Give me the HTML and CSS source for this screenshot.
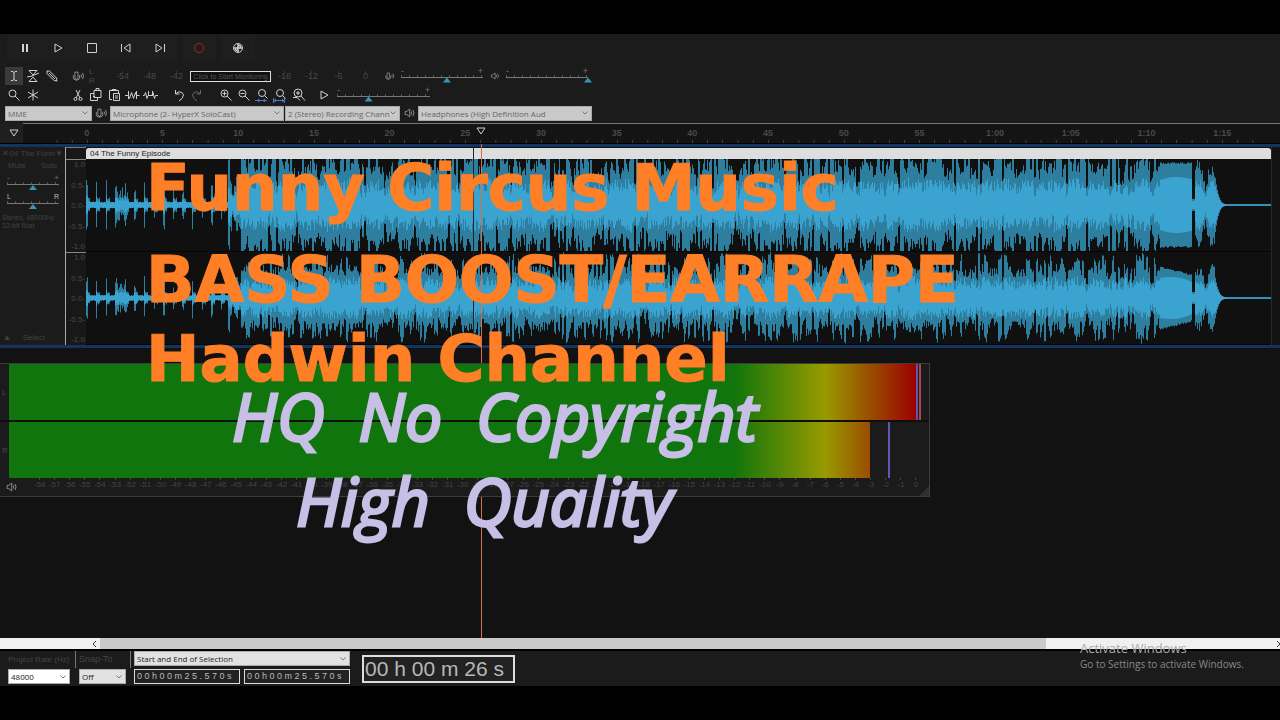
FILE: index.html
```html
<!DOCTYPE html>
<html lang="en">
<head>
<meta charset="utf-8">
<title>04 The Funny Episode</title>
<link rel="stylesheet" href="styles.css">
</head>
<body>
<svg class="defs" aria-hidden="true">
  <defs>
    <symbol id="mic" viewBox="0 0 18 18"><path d="M5 4h4v7q0 2-2 2t-2-2zM3 8v3q0 3 3 3h2q3 0 3-3V8M7 14v1M13 7q1 2 0 4M15 5q2 4 0 8"/></symbol>
    <symbol id="speaker" viewBox="0 0 18 18"><path d="M4 7h2l4-3v10l-4-3H4zM12 7q1 2 0 4M14 5q3 4 0 8"/></symbol>
    <symbol id="lens" viewBox="0 0 18 18"><circle cx="7.500" cy="7.500" r="3.500"/><path d="M10 10l4.500 4.500"/></symbol>
    <symbol id="play" viewBox="0 0 18 18"><path d="M6 5v8l7-4z"/></symbol>
  </defs>
</svg>

<main class="app">
  <div class="transport">
    <button aria-label="Pause"><svg viewBox="0 0 18 18"><path d="M8 5v8M12 5v8" stroke-width="2"/></svg></button>
    <button aria-label="Play"><svg><use href="#play"/></svg></button>
    <button aria-label="Stop"><svg viewBox="0 0 18 18"><path d="M4.500 4.500h9v9h-9z"/></svg></button>
    <button aria-label="Skip to start"><svg viewBox="0 0 18 18"><path d="M4.500 5v8M13 5v8L7 9z"/></svg></button>
    <button aria-label="Skip to end"><svg viewBox="0 0 18 18"><path d="M13.500 5v8M5 5v8l6-4z"/></svg></button>
    <button class="record" aria-label="Record"><svg viewBox="0 0 18 18"><circle cx="9" cy="9" r="4.500"/></svg></button>
    <button class="share" aria-label="Share audio"><svg viewBox="0 0 18 18"><circle cx="9" cy="9" r="4.500"/><path d="M9 5v8M5 9h8M10 6l2 2M6 10l2 2" stroke-width="1.500"/></svg></button>
  </div>

  <div class="tools">
    <div class="group pair">
      <button class="on" aria-label="Selection tool"><svg viewBox="0 0 18 18"><path d="M6 4.500h2l1 1 1-1h2M9 5v8M6 13.500h2l1-1 1 1h2"/></svg></button>
      <button aria-label="Envelope tool"><svg viewBox="0 0 18 18"><path d="M5 3.500h8L9 8zM9 10l4 4.500H5zM3 10l5-1 7-3"/></svg></button>
      <button aria-label="Draw tool"><svg viewBox="0 0 18 18"><path d="M4 4l2.500 0 7 7 .5 3-3-.5-7-7zM6 6l6 6"/></svg></button>
    </div>
    <div class="group rec-meter">
      <button aria-label="Record meter"><svg class="dim"><use href="#mic"/></svg></button>
      <span class="lr"><i>L</i><i>R</i></span>
      <div class="scale"><span>-54</span><span>-48</span><span>-42</span><button class="monitor">Click to Start Monitoring</button><span>-18</span><span>-12</span><span>-6</span><span>0</span></div>
    </div>
    <div class="group volume">
      <svg class="dim"><use href="#mic"/></svg>
      <div class="slider"><span>-</span><span>+</span><input type="range" aria-label="Recording volume" min="0" max="100" value="56"></div>
    </div>
    <div class="group volume">
      <svg class="dim"><use href="#speaker"/></svg>
      <div class="slider"><span>-</span><span>+</span><input type="range" aria-label="Playback volume" min="0" max="100" value="100"></div>
    </div>
  </div>

  <div class="tools edit">
    <div class="group pair">
      <button aria-label="Zoom tool"><svg><use href="#lens"/></svg></button>
      <button aria-label="Multi tool"><svg viewBox="0 0 18 18"><path d="M9 3.500v11M4 6l10 6M4 12l10-6"/></svg></button>
    </div>
    <div class="group cutting">
      <button aria-label="Cut"><svg viewBox="0 0 18 18"><path d="M7 4l4 8M11 4l-4 8"/><circle cx="6.500" cy="13" r="1.500"/><circle cx="11.500" cy="13" r="1.500"/></svg></button>
      <button aria-label="Copy"><svg viewBox="0 0 18 18"><path d="M7 4.500h7v7H7zM7 7.500H3.500v7h7v-3M9 4V2.500h3V4M6 10.500h2"/></svg></button>
      <button aria-label="Paste"><svg viewBox="0 0 18 18"><path d="M7 13.500H4.500v-9h9V7M7 5V3.500h4V5M8.500 7.500h6v7h-6zM10 10h3M10 12h3"/></svg></button>
      <button aria-label="Trim"><svg viewBox="0 0 18 18"><path d="M2 9.500h3l1.500 3 2-6 2 6 2-6 1 3h3M5.500 5v8M13.500 5v8"/></svg></button>
      <button aria-label="Silence"><svg viewBox="0 0 18 18"><path d="M2 9.500h1.500l1-3 1.500 6 1-3h4l1-3 1.500 6 1-3H17M7.500 5v5M11.500 5v5"/></svg></button>
    </div>
    <div class="group history">
      <button aria-label="Undo"><svg viewBox="0 0 18 18"><path d="M5.500 4v4h4M6 7.500q3-3 6-1t0 6l-3 2.500"/></svg></button>
      <button class="off" aria-label="Redo"><svg viewBox="0 0 18 18"><path d="M12.500 4v4h-4M12 7.500q-3-3-6-1t0 6l3 2.500"/></svg></button>
    </div>
    <div class="group zooms">
      <button aria-label="Zoom in"><svg viewBox="0 0 18 18"><use href="#lens"/><path d="M5.500 7.500h4M7.500 5.500v4"/></svg></button>
      <button aria-label="Zoom out"><svg viewBox="0 0 18 18"><use href="#lens"/><path d="M5.500 7.500h4"/></svg></button>
      <button aria-label="Fit selection"><svg viewBox="0 0 18 18"><circle cx="9" cy="7" r="3.500"/><path d="M11.500 9.500l3 3"/><path class="blue" d="M2 14.500h12M5 13l2 1.500L5 16M12 13l-2 1.500 2 1.500"/></svg></button>
      <button aria-label="Fit project"><svg viewBox="0 0 18 18"><circle cx="9" cy="7" r="3.500"/><path d="M11.500 9.500l3 3"/><path class="blue" d="M2.500 12v5M13.500 12v5M3 14.500h10M5 13l-2 1.500L5 16M11 13l2 1.500-2 1.500"/></svg></button>
      <button aria-label="Zoom toggle"><svg viewBox="0 0 18 18"><circle cx="9" cy="7" r="4"/><path d="M12 10l4 4.500M7 7h4M9 5v4M4 11.500h4l3 3"/></svg></button>
    </div>
    <div class="group speed">
      <button aria-label="Play at speed"><svg><use href="#play"/></svg></button>
      <div class="slider wide"><span>-</span><span>+</span><input type="range" aria-label="Playback speed" min="0" max="100" value="34"></div>
    </div>
  </div>

  <div class="devices">
    <select class="host" aria-label="Audio host"><option>MME</option></select>
    <svg class="dim"><use href="#mic"/></svg>
    <select class="device" aria-label="Recording device"><option>Microphone (2- HyperX SoloCast)</option></select>
    <select class="channels" aria-label="Recording channels"><option>2 (Stereo) Recording Chann</option></select>
    <svg class="dim"><use href="#speaker"/></svg>
    <select class="device" aria-label="Playback device"><option>Headphones (High Definition Aud</option></select>
  </div>

  <div class="ruler">
    <button class="pin" aria-label="Pin play head"><svg viewBox="0 0 18 18"><path d="M5 6h8l-4 6z"/></svg></button>
    <div class="marks"><span>0</span><span>5</span><span>10</span><span>15</span><span>20</span><span>25</span><span>30</span><span>35</span><span>40</span><span>45</span><span>50</span><span>55</span><span>1:00</span><span>1:05</span><span>1:10</span><span>1:15</span></div>
    <svg class="playhead" viewBox="0 0 10 8"><path d="M1 1h8L5 7z"/></svg>
  </div>

  <section class="workspace">
    <div class="track">
      <aside class="panel">
        <div class="name"><b>✕</b><span>04 The Funn</span><b>▼</b></div>
        <div class="mute"><button>Mute</button><button>Solo</button></div>
        <div class="slider small"><span>-</span><span>+</span><input type="range" aria-label="Gain" value="50"></div>
        <div class="slider small pan"><span>L</span><span>R</span><input type="range" aria-label="Pan" value="50"></div>
        <p>Stereo, 48000Hz<br>32-bit float</p>
        <div class="foot"><b>▲</b><button>Select</button></div>
      </aside>
      <div class="levels">
        <div class="channel"><span>1.0</span><span>0.5-</span><span>0.0-</span><span>-0.5-</span><span>-1.0</span></div>
        <div class="channel"><span>1.0</span><span>0.5-</span><span>0.0-</span><span>-0.5-</span><span>-1.0</span></div>
      </div>
      <div class="clip">
        <h2>04 The Funny Episode</h2>
        <svg class="wave" data-channel="0" viewBox="0 0 1185 92" preserveAspectRatio="none"></svg>
        <svg class="wave" data-channel="1" viewBox="0 0 1185 92" preserveAspectRatio="none"></svg>
      </div>
      <i class="cursor"></i>
    </div>
    <i class="playline"></i>

    <div class="meter">
      <div class="row"><span>L</span><div class="bar"></div><i class="peak"></i><i class="clipmark"></i></div>
      <div class="row second"><span>R</span><div class="bar low"></div><i class="peak"></i></div>
      <div class="db"><svg class="dim"><use href="#speaker"/></svg><div class="ticks"></div></div>
      <svg class="grip" viewBox="0 0 10 10"><path d="M10 0v10H0z"/></svg>
    </div>
  </section>

  <div class="scrollbar"><button aria-label="Scroll left"><svg viewBox="0 0 6 8"><path d="M5 1L2 4l3 3"/></svg></button><i></i><button aria-label="Scroll right"><svg viewBox="0 0 6 8"><path d="M3 1l3 3-3 3"/></svg></button></div>

  <footer class="status">
    <div class="field rate"><label for="rate">Project Rate (Hz)</label><select id="rate"><option>48000</option></select></div>
    <div class="field snap"><label for="snap">Snap-To</label><select id="snap"><option>Off</option></select></div>
    <div class="field selection">
      <select aria-label="Selection format"><option>Start and End of Selection</option></select>
      <div class="times"><output>0 0 h 0 0 m 2 5 . 5 7 0 s</output><output>0 0 h 0 0 m 2 5 . 5 7 0 s</output></div>
    </div>
    <output class="clock">00 h 00 m 26 s</output>
  </footer>
</main>

<div class="title">
  <p>Funny Circus Music</p>
  <p class="loud">BASS BOOST/EARRAPE</p>
  <p>Hadwin Channel</p>
</div>
<div class="caption">
  <p><span>HQ</span> <span>No</span> <span>Copyright</span></p>
  <p class="quality"><span>High</span> <span>Quality</span></p>
</div>
<div class="watermark"><p>Activate Windows</p><p>Go to Settings to activate Windows.</p></div>
<script src="wave.js"></script>
</body>
</html>
```
FILE: styles.css
```css
* { box-sizing: border-box; }
body { margin: 0; background: #000; color: #4a4a4a; font: 9px/11px "Liberation Sans", Arial, sans-serif; position: relative; overflow: hidden; }
p, h2 { margin: 0; }
h2 { font-weight: 400; }
i, b { font-style: normal; font-weight: 400; display: block; }
button { padding: 0; border: 0; background: none; color: inherit; font: inherit; }
svg { display: block; width: 18px; height: 18px; fill: none; stroke: #d0d0d0; stroke-width: 1; }
.defs { position: absolute; width: 0; height: 0; }
.dim { stroke: #aaa; padding: 2px; }
.blue { stroke: #4f74c8; }
.off svg { stroke: #666; }
.app { min-height: 100vh; padding: 34px 0; display: flex; flex-direction: column; }
.app > div { background: #1b1b1b; flex: none; }

.transport { height: 32px; display: flex; padding: 0 7px 5px; }
.transport button { width: 34px; display: grid; place-items: center; background: #1e1e1e; }
.transport .record { margin-left: 5px; }
.transport .record svg { stroke: #a82424; }
.transport .share { margin-left: 5px; }

.tools { height: 20px; display: flex; padding-left: 5px; align-items: center; }
.edit { height: 18px; }
.group { display: flex; align-items: center; }
.pair { gap: 1px; width: 64px; }
.on { background: #3a3a3a; }
.rec-meter { width: 313px; }
.lr { width: 22px; font-size: 8px; line-height: 9px; padding-left: 2px; }
.scale { display: grid; grid-template-columns: repeat(3, 27px) 81px repeat(4, 27px); text-align: center; }
.scale span { background: linear-gradient(#3a3a3a, #3a3a3a) center top / 1px 2px no-repeat; }
.monitor { border: 1px solid #ddd; font-size: 7px; line-height: 9px; background: #111; color: #555; white-space: nowrap; }
.volume { width: 105px; }
.slider { width: 90px; display: grid; grid-template-columns: 1fr 1fr; padding: 0 4px; height: 17px; line-height: 6px; color: #777; }
.slider span:nth-child(2) { text-align: right; }
.slider input { grid-column: 1 / 3; margin: 0 -4px; width: 90px; height: 9px; appearance: none; background: repeating-linear-gradient(90deg, #555 0 1px, transparent 1px 8px) 4px 0 / 82px 2px no-repeat, linear-gradient(#777, #777) 4px 2px / 82px 1px no-repeat; }
.slider input::-webkit-slider-thumb { appearance: none; width: 8px; height: 5px; margin-top: 2px; background: #3795ba; clip-path: polygon(50% 0, 100% 100%, 0 100%); }
.slider.wide, .slider.wide input { width: 101px; }
.slider.wide input { background-size: 93px 2px, 93px 1px; }
.slider.small, .slider.small input { width: 60px; }
.slider.small input { background-size: 52px 2px, 52px 1px; }
.cutting { width: 101px; }
.history { width: 47px; }
.zooms { width: 98px; }

.devices { height: 19px; display: flex; align-items: center; padding: 0 0 1px 5px; }
select { appearance: none; border: 1px solid #aaa; border-radius: 0; margin: 0; padding: 0 8px 0 2px; height: 15px; color: #666; font: 8px/11px "Open Sans", sans-serif; background: #c9c9c9 url("data:image/svg+xml,%3Csvg xmlns='http://www.w3.org/2000/svg' viewBox='0 0 6 4'%3E%3Cpath d='M.5.5L3 3 5.500.5' fill='none' stroke='%23777'/%3E%3C/svg%3E") right 3px center / 6px 4px no-repeat; }
.host { width: 87px; }
.device { width: 174px; }
.channels { width: 115px; margin-left: 1px; }

.ruler { height: 21px; position: relative; display: flex; border-bottom: 1px solid #000; }
.app > .ruler { background: #141414; }
.pin { width: 23px; padding-left: 5px; background: #1f1f1f; }
.marks { flex: 1; display: flex; padding: 0 20px 0 26px; border-top: 1px solid #777; text-align: center; font-weight: 700; line-height: 18px; }
.marks span { flex: 1; background: linear-gradient(90deg, transparent 49%, #444 49% 55%, transparent 55%) left bottom / 20% 3px repeat-x; }
.playhead { position: absolute; left: 476px; top: 4px; width: 10px; height: 8px; }

.workspace { flex: 1; position: relative; background: #121212; }
.track { position: relative; height: 204px; display: grid; grid-template-columns: 65px 21px 1fr; border-top: 3px solid #123461; border-bottom: 3px solid #123461; padding-right: 8px; }
.panel { display: flex; flex-direction: column; background: #1b1b1b; color: #414141; font-size: 8px; padding: 1px 2px 0; }
.name, .mute, .foot { display: flex; justify-content: space-between; }
.mute { padding: 1px 6px 4px; }
.slider.small { margin: 0 0 2px 1px; }
.pan { color: #bbb; font-size: 7px; }
.panel p { line-height: 8px; padding-top: 1px; font-size: 7px; }
.foot { margin-top: auto; padding: 0 18px 2px 1px; }
.levels { border-left: 1px solid #aaa; border-top: 1px solid #777; padding-top: 11px; background: #181818; display: grid; grid-template-rows: 1fr 1fr; }
.channel { border-top: 1px solid #888; display: flex; flex-direction: column; justify-content: space-between; align-items: flex-end; font-size: 8px; line-height: 10px; padding-right: 1px; }
.clip { background: #101010; padding-top: 1px; display: grid; grid-template-rows: 11px 1fr 1fr; border-right: 1px solid #282828; }
.clip h2 { background: #dedede; color: #222; border-radius: 3px 3px 0 0; padding-left: 4px; font-size: 8px; line-height: 11px; }
.wave { width: 100%; height: 100%; min-height: 0; stroke: none; border-bottom: 1px solid #050505; }
.outer { fill: #2e7f9f; }
.inner { fill: #3aa3d0; }
.cursor { position: absolute; left: 473px; top: 0; bottom: 0; width: 1px; background: #222; }
.playline { position: absolute; left: 481px; top: 0; bottom: 0; width: 1px; background: #d0704e; }

.meter { position: absolute; left: 0; top: 219px; width: 930px; max-width: 100%; border: 1px solid #3c3c3c; border-left: 0; background: #1b1b1b; }
.row { display: flex; align-items: center; height: 56px; }
.row > span { width: 9px; padding-left: 2px; font-size: 8px; }
.row i, .bar { align-self: stretch; }
.second { height: 58px; border-top: 2px solid #0e0e0e; }
.bar { width: 907px; background: linear-gradient(90deg, #10750c 725px, #999a00 816px, #9b0000 907px); }
.low { width: 861px; }
.peak { width: 2px; background: #6058ae; }
.low + .peak { margin-left: 18px; }
.clipmark { width: 2px; margin-left: 1px; background: #b24646; }
.db { display: flex; height: 18px; padding: 0 6px 0 2px; }
.ticks { flex: 1; display: flex; padding-left: 12px; font-size: 8px; line-height: 14px; text-align: center; color: #444; }
.ticks span { flex: 1 0 0; min-width: 0; background: linear-gradient(#444, #444) center top / 1px 2px no-repeat; }
.grip { position: absolute; right: 0; bottom: 0; width: 10px; height: 10px; fill: #303030; stroke: none; }

.app > .scrollbar { height: 13px; display: flex; justify-content: space-between; background: #f0f0f0; border-bottom: 2px solid #000; }
.scrollbar svg { width: 6px; height: 8px; stroke: #333; }
.scrollbar button:first-child { padding-left: 91px; width: 100px; }
.scrollbar i { width: 946px; background: #cacaca; margin-right: auto; }
.status { min-height: 35px; display: flex; background: #1b1b1b; padding-left: 8px; }
.field { display: flex; flex-direction: column; justify-content: space-between; padding-bottom: 2px; color: #444; }
.field label { line-height: 17px; white-space: nowrap; border-right: 1px solid #777; }
.status select { background-color: #e1e1e1; color: #222; }
.rate { width: 71px; }
.rate label { font-size: 8px; width: 68px; }
.rate select { width: 62px; }
.status .rate select { background-color: #fff; }
.snap { width: 55px; }
.snap label { width: 52px; }
.snap select { width: 47px; }
.selection { width: 228px; }
.selection select { width: 216px; }
.times { display: flex; gap: 4px; }
.times output { width: 106px; border: 1px solid #ddd; background: #222; color: #bbb; line-height: 13px; padding-left: 2px; white-space: nowrap; overflow: hidden; }
.clock { align-self: center; width: 153px; border: 2px solid #ddd; background: #222; color: #b8b8b8; font-size: 21px; line-height: 24px; padding-left: 1px; white-space: nowrap; }

.title { position: absolute; left: 146px; top: 149px; color: #ff7f27; font: 700 64px/79px "DejaVu Sans", sans-serif; -webkit-text-stroke: 1px #ff7f27; white-space: nowrap; }
.loud { padding-top: 13px; }
.caption { position: absolute; left: 232px; top: 373px; color: #c8bfe7; font: italic 400 66px/85px "Open Sans", sans-serif; -webkit-text-stroke: 3px #c8bfe7; stroke-linejoin: round; white-space: nowrap; }
.caption p { display: flex; gap: 34px; }
.caption .quality { padding-left: 64px; }
.watermark { position: absolute; left: 1080px; top: 640px; font: 10px/15px "Open Sans", sans-serif; color: #888; white-space: nowrap; }
.watermark p:first-child { font-size: 13px; line-height: 17px; color: #aaa; }
```
FILE: wave.js
```js
const noise = (n) => {
  const v = Math.sin(n * 127.1 + 311.7) * 43758.5453;
  return v - Math.floor(v);
};

// Peak and average level of the clip at column x, as a height in pixels.
function level(x, channel, side) {
  const seed = x + channel * 5000 + side * 1700;
  const size = channel ? 0.74 : 1;
  if (x < 142) {
    const beat = x % 9.6;
    const spike = beat < 1.4 ? 12 + noise(Math.floor(x / 9.6) + 7) * 13 : beat < 4 ? 7 : 3;
    const swell = x > 30 && x < 42 ? 9 + noise(seed) * 7 : 0;
    const peak = Math.max(spike, swell) * (channel ? 0.85 : 1) * (0.8 + noise(seed) * 0.3);
    return [peak, Math.min(peak, 2 + peak * 0.3)];
  }
  if (x >= 1140) return [0.8, 0.8];
  if (x >= 1129) {
    const tail = Math.pow((1140 - x) / 11, 3);
    return [1 + 26 * tail * size, 1 + 18 * tail * size];
  }
  if (x > 1073 && x < 1106) {
    const slope = channel ? (x - 1073) / 33 * 9 : 0;
    return [(41 * (channel ? 0.75 : 1)) - slope + noise(seed) * 2, (channel ? 20 - slope / 2 : 25) + Math.sin((x - 1073) / 11) * 3];
  }
  if (x >= 1106 && x < 1109) return [6, 4];
  if (x >= 1109) {
    const pulse = 0.4 + 0.6 * Math.abs(Math.cos((x - 1112) / 14 * Math.PI));
    return [(30 + noise(seed) * 16) * pulse * size, (18 + noise(seed + 8) * 8) * pulse * size];
  }
  const beat = Math.abs(Math.sin(x / 7.4)) * 8 + Math.abs(Math.sin(x / 23)) * 4;
  const burst = noise(Math.floor(x / 2) + channel * 900) > 0.66 ? 15 : 0;
  let peak = (22 + beat + noise(seed + 90) * 14 + burst) * size;
  let body = (9 + beat * 0.6 + noise(seed + 300) * 12) * (channel ? 0.8 : 1);
  if (noise(Math.floor(x / 2) + 40) > 0.86) { peak *= 0.6; body *= 0.6; }
  if (x < 155 && x > 143) { peak *= 0.5; body *= 0.6; }
  return [Math.min(46, peak), Math.min(peak, body)];
}

document.querySelectorAll(".wave").forEach((svg) => {
  const channel = Number(svg.dataset.channel);
  ["outer", "inner"].forEach((name, kind) => {
    let d = "";
    for (let x = 0; x < 1185; x++) {
      const up = level(x, channel, 0)[kind];
      const down = level(x, channel, 1)[kind];
      d += `M${x} ${(46 - up).toFixed(1)}h1V${(46 + down).toFixed(1)}h-1z`;
    }
    const path = document.createElementNS("http://www.w3.org/2000/svg", "path");
    path.setAttribute("class", name);
    path.setAttribute("d", d);
    svg.append(path);
  });
});

const ticks = document.querySelector(".ticks");
for (let db = -58; db <= 0; db++) {
  const mark = document.createElement("span");
  mark.textContent = db;
  ticks.append(mark);
}
```
